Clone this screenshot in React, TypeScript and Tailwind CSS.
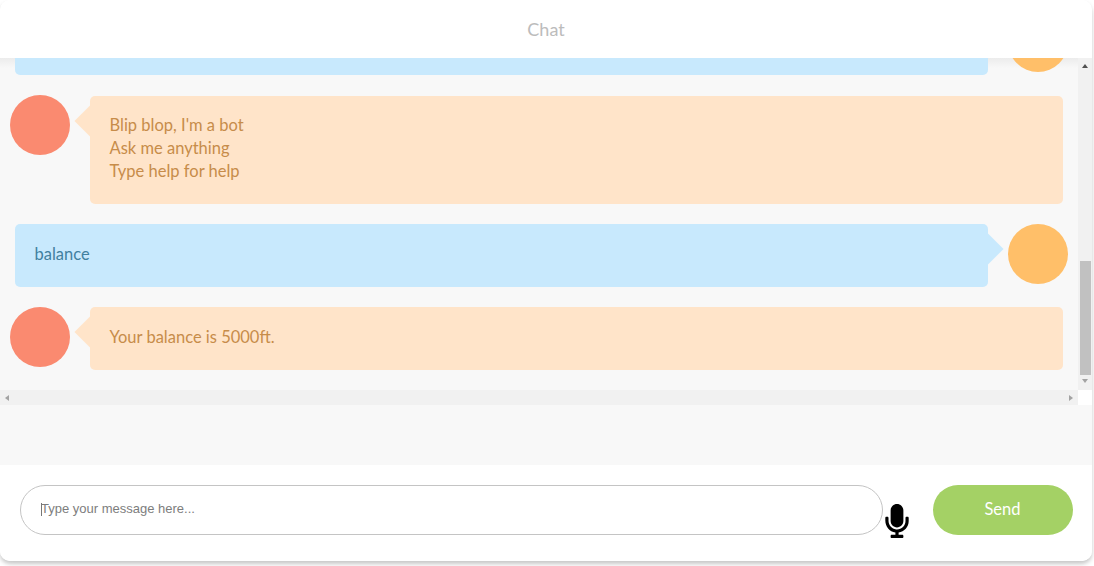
import { FaMicrophone } from 'react-icons/fa';

const BotRow = ({ lines, first }: { lines: string[]; first?: boolean }) => (
  <div className="flex items-start">
    <div className={`w-[60px] h-[60px] ml-[9.5px] rounded-full bg-[#fa8a70] shrink-0 ${first ? '-mt-px' : ''}`} />
    <div className={`relative ml-[20.5px] w-[972.5px] rounded-[5px] bg-[#ffe4c9] pl-[19.5px] pr-[20px] text-[16.5px] leading-[23px] text-[#c78c4a] ${first ? 'pt-[18px] pb-[21px]' : 'pt-[19px] pb-[21px]'}`}>
      <div className="absolute -left-[11px] top-[14px] w-[22px] h-[22px] rotate-45 bg-[#ffe4c9]" />
      <div className="relative">
        {lines.map((line) => (
          <div key={line}>{line}</div>
        ))}
      </div>
    </div>
  </div>
);

const UserRow = ({ text, top }: { text: string; top?: boolean }) => (
  <div className={`flex items-start ${top ? 'mb-px' : ''}`}>
    <div className="relative ml-[14.5px] w-[973px] rounded-[5px] bg-[#c8e9fd] pl-[20px] pr-[20px] pt-[19px] pb-[21px] text-[16.5px] leading-[23px] text-[#41809f]">
      <div className="absolute -right-[11px] top-[14px] w-[22px] h-[22px] rotate-45 bg-[#c8e9fd]" />
      <div className="relative">{text}</div>
    </div>
    <div className="w-[60px] h-[60px] ml-[20px] rounded-full bg-[#ffbf69] shrink-0" />
  </div>
);

export default function App() {
  return (
    <div className="w-[1094px] h-[566px] bg-white overflow-hidden font-['Lato',sans-serif]">
      <div className="w-[1092px] h-[561px] rounded-[10px] bg-white flex flex-col overflow-hidden shadow-[0_3px_4px_rgba(0,0,0,0.22)]">
        <div className="relative z-10 h-[58px] shrink-0 bg-white flex items-center justify-center text-[18px] text-[#bcbcbc]">
          Chat
        </div>

        <div className="h-[407px] shrink-0 bg-[#f8f8f8]">
          <div className="h-[347px] flex flex-col">
            <div className="flex h-[332px]">
              <div className="relative w-[1078px] h-full overflow-hidden">
                <div className="absolute inset-x-0 top-0 h-[10px] bg-gradient-to-b from-black/5 to-transparent" />
                <div className="relative h-full flex flex-col justify-end gap-[20px] pb-[20px]">
                  <UserRow top text={'\u00a0'} />
                  <BotRow first lines={["Blip blop, I'm a bot", 'Ask me anything', 'Type help for help']} />
                  <UserRow text="balance" />
                  <BotRow lines={['Your balance is 5000ft.']} />
                </div>
              </div>
              <div className="w-[14px] h-full bg-[#f1f1f1] flex flex-col items-center">
                <div className="mt-[6px] w-0 h-0 border-x-[3px] border-x-transparent border-b-[4px] border-b-[#505050]" />
                <div className="mt-[193px] w-[11px] h-[114px] bg-[#c1c1c1]" />
                <div className="mt-[4px] w-0 h-0 border-x-[3px] border-x-transparent border-t-[4px] border-t-[#a3a3a3]" />
              </div>
            </div>
            <div className="flex h-[15px]">
              <div className="w-[1078px] bg-[#f1f1f1] flex items-center justify-between px-[5px]">
                <div className="w-0 h-0 border-y-[3px] border-y-transparent border-r-[4px] border-r-[#a3a3a3]" />
                <div className="w-0 h-0 border-y-[3px] border-y-transparent border-l-[4px] border-l-[#a3a3a3]" />
              </div>
              <div className="w-[14px] bg-white" />
            </div>
          </div>
        </div>

        <div className="flex-1 bg-white flex items-start pt-[20px] pl-[20px]">
          <div className="relative w-[863px] h-[50px]">
            <input
              placeholder="Type your message here..."
              className="w-full h-full rounded-full border border-[#c4c4c4] bg-white pl-[20px] pr-[20px] pb-[3px] text-[13px] font-['Liberation_Sans',sans-serif] placeholder:text-[#7d7d7d] outline-none"
            />
            <div className="absolute left-[21px] top-[18px] w-px h-[13px] bg-[#777777]" />
          </div>
          <FaMicrophone className="ml-[2px] mt-[19px] w-[24px] h-[34px] text-black shrink-0" />
          <button className="ml-[24px] w-[140px] h-[50px] pb-px pr-px rounded-full bg-[#a4d165] text-white text-[16.5px]">
            Send
          </button>
        </div>
      </div>
    </div>
  );
}
